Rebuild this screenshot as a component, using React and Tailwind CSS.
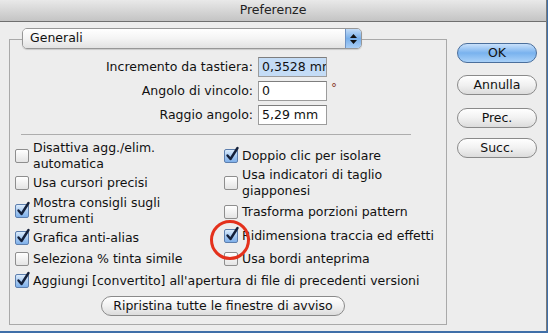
import React from 'react';

const font = { fontFamily: '"DejaVu Sans", "Lucida Grande", sans-serif' };

function Check({ checked }) {
    return (
        <span className="relative inline-block w-[14px] h-[14px] shrink-0">
            {checked ? (
                <span className="block w-[14px] h-[14px] rounded-[2px] border border-[#5d7fae] bg-gradient-to-b from-[#dcecfc] via-[#a9cbf1] to-[#7fb0ea]" />
            ) : (
                <span className="block w-[14px] h-[14px] rounded-[2px] border border-[#8e8e8e] bg-gradient-to-b from-[#ffffff] to-[#e4e4e4]" />
            )}
            {checked && (
                <svg className="absolute left-[1px] top-[-3px]" width="15" height="16" viewBox="0 0 15 16">
                    <path d="M2.5 9.5 L5.5 13 L12.5 2" fill="none" stroke="#14203a" strokeWidth="2.4" strokeLinecap="round" strokeLinejoin="round" />
                </svg>
            )}
        </span>
    );
}

function Item({ checked, children, className = '' }) {
    return (
        <div className={`flex items-center gap-[4px] ${className}`}>
            <Check checked={checked} />
            <span className="text-[12.5px] leading-[16px] text-[#111] whitespace-nowrap">{children}</span>
        </div>
    );
}

function Field({ label, value, highlight, suffix }) {
    return (
        <div className="flex items-center h-[20px]">
            <span className="w-[243px] text-right text-[12.5px] text-[#111]">{label}</span>
            <div
                className={`ml-[5px] w-[69px] h-[20px] overflow-hidden whitespace-nowrap border border-[#9c9c9c] border-t-[#7e7e7e] pl-[3px] text-[12.5px] leading-[18px] text-[#111] ${
                    highlight ? 'bg-[#c4dcf6]' : 'bg-white'
                }`}
            >
                {value}
            </div>
            {suffix && <span className="ml-[4px] -mt-[6px] text-[12px] text-[#8a3c2c]">{suffix}</span>}
        </div>
    );
}

function PillButton({ children, primary, className = '' }) {
    return (
        <div
            className={`w-[80px] h-[20px] rounded-full border flex items-center justify-center text-[12.5px] text-[#111] ${
                primary
                    ? 'border-[#4b6f9c] bg-gradient-to-b from-[#c9e1fb] via-[#79b2ee] to-[#a9d1f8]'
                    : 'border-[#8a8a8a] bg-gradient-to-b from-[#ffffff] via-[#f1f1f1] to-[#dcdcdc]'
            } ${className}`}
        >
            {children}
        </div>
    );
}

export default function App() {
    return (
        <div className="relative w-[548px] h-[333px] bg-[#3f6fa8]" style={font}>
            <div className="w-[547px] h-[331px] bg-[#ededed] border-r border-[#7a7a7a] flex flex-col">
                {/* barra del titolo */}
                <div className="h-[22px] shrink-0 border-b border-[#6f6f6f] bg-gradient-to-b from-[#e9e9e9] to-[#c4c4c4] flex items-center justify-center text-[12.5px] text-[#222]">
                    Preferenze
                </div>

                <div className="flex pl-[9px]">
                    {/* riquadro principale */}
                    <div className="mt-[17px] w-[438px] h-[286px] border border-[#a9a9a9] flex flex-col">
                        <div className="-mt-[12px] ml-[12px] w-[340px] h-[21px] flex rounded-[5px] border border-[#979797] shadow-[0_1px_1px_rgba(0,0,0,0.15)] overflow-hidden">
                            <div className="flex-1 flex items-center pl-[7px] text-[12.5px] text-[#111] bg-gradient-to-b from-[#ffffff] via-[#f4f4f4] to-[#e2e2e2]">
                                Generali
                            </div>
                            <div className="w-[16px] flex flex-col items-center justify-center gap-[2px] border-l border-[#6f93c4] bg-gradient-to-b from-[#c3dcf7] via-[#78afea] to-[#a8cdf5]">
                                <svg width="7" height="4" viewBox="0 0 7 4"><path d="M3.5 0 L7 4 L0 4 Z" fill="#111" /></svg>
                                <svg width="7" height="4" viewBox="0 0 7 4"><path d="M0 0 L7 0 L3.5 4 Z" fill="#111" /></svg>
                            </div>
                        </div>

                        <div className="mt-[8px] flex flex-col gap-[4px]">
                            <Field label="Incremento da tastiera:" value="0,3528 mm" highlight />
                            <Field label="Angolo di vincolo:" value="0" suffix="°" />
                            <Field label="Raggio angolo:" value="5,29 mm" />
                        </div>

                        <div className="mt-[9px] ml-[11px] w-[390px] h-px bg-[#adadad]" />

                        <div className="flex mt-[5px]">
                            <div className="w-[209px] pl-[5px] flex flex-col">
                                <Item>
                                    Disattiva agg./elim.
                                    <br />
                                    automatica
                                </Item>
                                <Item className="mt-[3px]">Usa cursori precisi</Item>
                                <Item checked className="mt-[4px]">
                                    Mostra consigli sugli
                                    <br />
                                    strumenti
                                </Item>
                                <Item checked className="mt-[3px]">Grafica anti-alias</Item>
                                <Item className="mt-[5px]">Seleziona % tinta simile</Item>
                            </div>
                            <div className="pl-[5px] pt-[8px] flex flex-col">
                                <Item checked>Doppio clic per isolare</Item>
                                <Item className="mt-[3px]">
                                    Usa indicatori di taglio
                                    <br />
                                    giapponesi
                                </Item>
                                <Item className="mt-[5px]">Trasforma porzioni pattern</Item>
                                <Item checked className="mt-[8px]">Ridimensiona traccia ed effetti</Item>
                                <Item className="mt-[7px]">Usa bordi anteprima</Item>
                            </div>
                        </div>

                        <Item checked className="mt-[6px] pl-[5px]">
                            Aggiungi [convertito] all'apertura di file di precedenti versioni
                        </Item>

                        <div className="mt-[7px] ml-[91px] w-[244px] h-[20px] rounded-full border border-[#8a8a8a] bg-gradient-to-b from-[#ffffff] via-[#f1f1f1] to-[#dcdcdc] flex items-center justify-center text-[12.5px] text-[#111]">
                            Ripristina tutte le finestre di avviso
                        </div>
                    </div>

                    {/* pulsanti */}
                    <div className="ml-[10px] mt-[21px] flex flex-col">
                        <PillButton primary>OK</PillButton>
                        <PillButton className="mt-[12px]">Annulla</PillButton>
                        <PillButton className="mt-[13px]">Prec.</PillButton>
                        <PillButton className="mt-[10px]">Succ.</PillButton>
                    </div>
                </div>
            </div>

            {/* cerchio di evidenziazione */}
            <div className="absolute left-[210px] top-[220px] w-[40px] h-[40px] rounded-full border-[3px] border-[#e4311c]" />
        </div>
    );
}
